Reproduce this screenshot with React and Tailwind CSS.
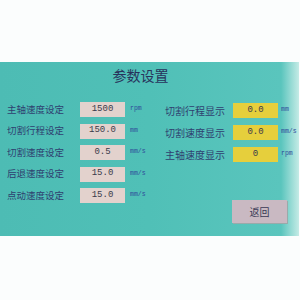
import React from "react";

const setRows = [
  { label: "主轴速度设定", value: "1500", unit: "rpm" },
  { label: "切割行程设定", value: "150.0", unit: "mm" },
  { label: "切割速度设定", value: "0.5", unit: "mm/s" },
  { label: "后退速度设定", value: "15.0", unit: "mm/s" },
  { label: "点动速度设定", value: "15.0", unit: "mm/s" },
];

const showRows = [
  { label: "切割行程显示", value: "0.0", unit: "mm" },
  { label: "切割速度显示", value: "0.0", unit: "mm/s" },
  { label: "主轴速度显示", value: "0", unit: "rpm" },
];

const cjk = { fontFamily: '"Noto Sans CJK SC", "Noto Sans", sans-serif' };
const mono = { fontFamily: '"Liberation Mono", "DejaVu Sans Mono", monospace' };

const Row = ({ row, box, labelW, labelSize, unitGap }) => (
  <div className="flex items-center h-[15px]">
    <div
      className={`${labelW} shrink-0 ${labelSize} leading-none text-[#2f3f70] whitespace-nowrap`}
      style={cjk}
    >
      {row.label}
    </div>
    <div
      className={`${box} shrink-0 w-[45px] h-[15px] flex items-center justify-center text-[9px] text-[#3a3a4a]`}
      style={mono}
    >
      {row.value}
    </div>
    <div
      className={`${unitGap} text-[6.5px] leading-none text-[#2f4a9a] whitespace-nowrap`}
      style={mono}
    >
      {row.unit}
    </div>
  </div>
);

const App = () => {
  return (
    <div className="w-[300px] h-[300px] bg-[#fbfdfd] overflow-hidden">
      <div className="mt-[62px] w-[299px] h-[174px] bg-[linear-gradient(90deg,#4dbcb4_0%,#50c0b7_50%,#5ac5bd_94%,#c4ebe6_100%)] flex flex-col">
        <div
          className="text-center text-[14px] leading-none text-[#28335c] pt-[6px] pr-[18px]"
          style={cjk}
        >
          参数设置
        </div>
        <div className="flex mt-[20px]">
          <div className="pl-[7px] w-[165px] shrink-0 flex flex-col gap-[6.5px]">
            {setRows.map((r) => (
              <Row
                key={r.label}
                row={r}
                box="bg-[#e3d2cd]"
                labelW="w-[73px]"
                labelSize="text-[9.5px]"
                unitGap="ml-[5px]"
              />
            ))}
          </div>
          <div className="flex flex-col gap-[7px] pt-[1px]">
            {showRows.map((r) => (
              <Row
                key={r.label}
                row={r}
                box="bg-[#e6cf3c]"
                labelW="w-[68px]"
                labelSize="text-[10px]"
                unitGap="ml-[3px]"
              />
            ))}
            <div className="mt-[31px] ml-[67px] w-[55px] h-[23px] bg-[#c9b9c2] shadow-[1px_1px_0_#9aa]">
              <div
                className="h-full flex items-center justify-center text-[10px] text-[#3a3a55]"
                style={cjk}
              >
                返回
              </div>
            </div>
          </div>
        </div>
      </div>
    </div>
  );
};

export default App;
